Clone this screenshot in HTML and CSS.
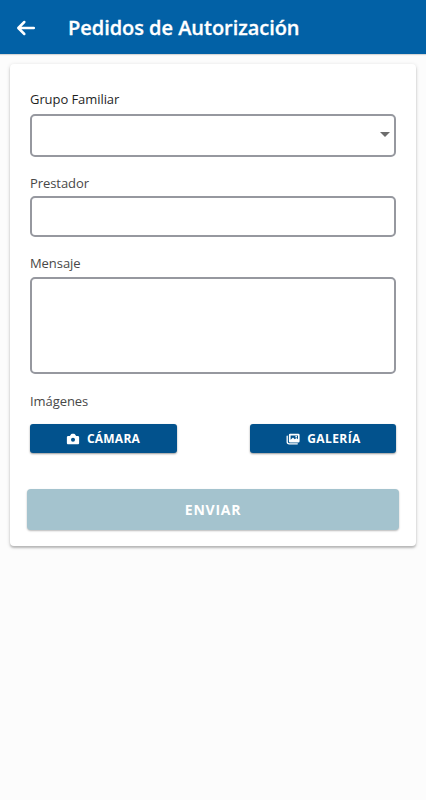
FILE: index.html
```html
<!DOCTYPE html>
<html lang="es">
<head>
  <meta charset="UTF-8" />
  <meta name="viewport" content="width=device-width, initial-scale=1.0"/>
  <title>Pedidos de Autorización</title>
  <link rel="stylesheet" href="styles.css">
</head>
<body>
  <header class="toolbar">
    <button type="button" class="back-btn" aria-label="Volver">
      <svg viewBox="0 0 20 16" width="20" height="16">
        <path d="M8.300 2 L2.300 8 L8.300 14 M2.600 8 H17.800" />
      </svg>
    </button>
    <h1>Pedidos de Autorización</h1>
  </header>

  <form class="card">
    <label for="grupo" class="label-dark">Grupo Familiar</label>
    <div class="select-wrap">
      <select id="grupo" class="field">
        <option></option>
      </select>
      <span class="arrow"></span>
    </div>

    <label for="prestador">Prestador</label>
    <input type="text" id="prestador" class="field">

    <label for="mensaje">Mensaje</label>
    <textarea id="mensaje" class="field"></textarea>

    <!-- Imágenes adjuntas -->
    <div class="images-label">Imágenes</div>
    <div class="image-buttons">
      <button type="button" class="btn">
        <svg viewBox="0 0 512 512" width="14" height="14">
          <path fill-rule="evenodd" d="M432 144h-59c-3 0-6-1.700-9-4.500l-31-49C323 73 314 64 292 64h-72c-22 0-31 9-41 26.500l-31 49c-2 2.800-5 4.500-9 4.500H80c-27 0-48 21-48 48v208c0 27 21 48 48 48h352c27 0 48-21 48-48V192c0-27-21-48-48-48zM256 212a74 74 0 1 1 0 148a74 74 0 1 1 0-148z" />
        </svg>
        <span>CÁMARA</span>
      </button>
      <button type="button" class="btn btn-gallery">
        <svg viewBox="0 0 14 12" width="14" height="12">
          <path class="line" d="M1.200 3.200 V8.800 Q1.200 10.800 3.200 10.800 H11.300" />
          <path fill-rule="evenodd" d="M4.200 0.800 H12.300 Q13.600 0.800 13.600 2.100 V8.200 Q13.600 9.500 12.300 9.500 H4.200 Q2.900 9.500 2.900 8.200 V2.100 Q2.900 0.800 4.200 0.800 Z M4.600 2.400 V6.800 L7 4.600 L8.700 6.200 L10.500 4.900 L12 6.200 V2.400 Z" />
          <circle cx="10.200" cy="3.700" r="0.900" />
        </svg>
        <span>GALERÍA</span>
      </button>
    </div>

    <button type="submit" class="btn-send" disabled>ENVIAR</button>
  </form>
</body>
</html>
```
FILE: styles.css
```css
* {
  box-sizing: border-box;
}

body {
  margin: 0;
  min-height: 100vh;
  background: #fcfcfc;
  font-family: "Open Sans", "Noto Sans", sans-serif;
}

.toolbar {
  display: flex;
  align-items: center;
  height: 54px;
  padding: 0 16px;
  background: #0261a6;
  box-shadow: 0 1px 1px rgba(0, 0, 0, 0.15);
}

.back-btn {
  display: flex;
  padding: 2px 0 0;
  border: none;
  background: none;
}

.back-btn svg {
  fill: none;
  stroke: #fff;
  stroke-width: 2.5;
  stroke-linecap: round;
  stroke-linejoin: round;
}

h1 {
  margin: 0 0 0 32px;
  color: #fff;
  font-size: 20px;
  line-height: 27px;
  font-weight: 600;
  letter-spacing: -0.04px;
  -webkit-text-stroke: 0.3px #fff;
}

.card {
  height: 482px;
  margin: 10px;
  padding: 26px 20px 0;
  background: #fff;
  border-radius: 4px;
  box-shadow: 0 2px 2px rgba(0, 0, 0, 0.2), 0 1px 4px rgba(0, 0, 0, 0.14);
}

label,
.images-label {
  display: block;
  font-size: 13px;
  line-height: 18px;
  letter-spacing: -0.07px;
  color: #484848;
}

.label-dark {
  color: #1f1f1f;
}

.field {
  display: block;
  width: 100%;
  margin: 0;
  padding: 8px;
  border: 2px solid #96989f;
  border-radius: 5px;
  background: #fff;
  font-family: inherit;
  font-size: 14px;
  resize: none;
  appearance: none;
}

.select-wrap {
  position: relative;
  margin: 5.500px 0 17.500px;
}

select.field {
  height: 43px;
}

.arrow {
  position: absolute;
  top: 18px;
  right: 6px;
  border: 5px solid transparent;
  border-top-color: #6d6d6d;
  border-bottom: none;
}

input.field {
  height: 41px;
  margin: 4px 0 17px;
}

textarea.field {
  height: 97px;
  margin: 5px 0 18px;
}

.image-buttons {
  display: flex;
  justify-content: space-between;
  margin-top: 14px;
}

.btn {
  display: flex;
  align-items: center;
  justify-content: center;
  gap: 7px;
  width: 147px;
  height: 29px;
  padding: 0 1px 0 0;
  border: none;
  border-radius: 3px;
  background: #02528d;
  box-shadow: 0 1px 2px rgba(0, 0, 0, 0.4);
  color: #fff;
  font-family: inherit;
  font-size: 12px;
  font-weight: 700;
  letter-spacing: 0.25px;
}

.btn-gallery {
  width: 146px;
  padding: 0 0 0 1px;
  letter-spacing: 0.4px;
}

.btn svg {
  fill: #fff;
}

.btn .line {
  fill: none;
  stroke: #fff;
  stroke-width: 1.3;
  stroke-linecap: round;
}

.btn-send {
  display: block;
  width: calc(100% + 6px);
  height: 41px;
  margin: 36px -3px 0;
  padding: 0 0 1px;
  border: none;
  border-radius: 4px;
  background: #a4c3ce;
  box-shadow: 0 1px 2px rgba(0, 0, 0, 0.28);
  color: #fff;
  font-family: inherit;
  font-size: 14px;
  font-weight: 700;
  letter-spacing: 0.75px;
}
```
